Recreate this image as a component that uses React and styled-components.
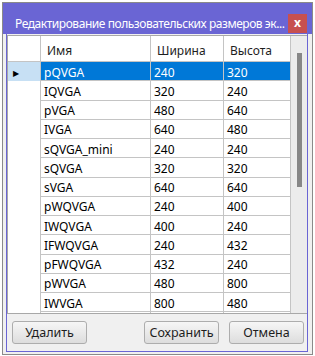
import React from 'react';
import styled, { createGlobalStyle } from 'styled-components';

const Global = createGlobalStyle`
  html, body { margin: 0; padding: 0; background: #ffffff; }
  body { font-family: "Noto Sans", "Segoe UI", sans-serif; }
`;

const PURPLE = '#6a65d4';
const LINE = '#c4c4c4';

const Window = styled.div`
  box-sizing: border-box;
  margin: 2px 0 0 2px;
  width: 311px;
  height: 353px;
  border: 1px solid #8a8a8a;
  background: #f0f0f0;
  display: flex;
  flex-direction: column;
`;

const TitleBar = styled.div`
  box-sizing: border-box;
  flex: none;
  height: 31px;
  background: ${PURPLE};
  display: flex;
  align-items: flex-end;
  gap: 1px;
  padding: 0 5px 1px 12px;
`;

const Title = styled.div`
  flex: 1;
  min-width: 0;
  height: 19px;
  line-height: 19px;
  color: #ffffff;
  font-size: 12px;
  letter-spacing: -0.45px;
  white-space: nowrap;
  overflow: hidden;
`;

const Close = styled.div`
  flex: none;
  width: 19px;
  height: 19px;
  background: #c75050;
  color: #ffffff;
  font-size: 12px;
  font-weight: bold;
  line-height: 17px;
  text-align: center;
`;

const Body = styled.div`
  box-sizing: border-box;
  flex: 1;
  margin: 0 4px 2px 3px;
  border: 1px solid ${PURPLE};
  border-top: none;
  padding-top: 1px;
  display: flex;
  flex-direction: column;
`;

const Grid = styled.div`
  box-sizing: border-box;
  flex: none;
  height: 279px;
  border: 1px solid #a8a8a8;
  border-right: none;
  background: #ffffff;
  display: flex;
  overflow: hidden;
`;

const Table = styled.div`
  flex: 1;
  overflow: hidden;
`;

const Row = styled.div`
  box-sizing: border-box;
  display: grid;
  grid-template-columns: 33px 110px 73px 67px;
  height: ${p => (p.$header ? '26px' : '19.25px')};
`;

const RowHead = styled.div`
  box-sizing: border-box;
  border-right: 1px solid ${LINE};
  border-bottom: ${p => (p.$header ? `1px solid ${LINE}` : 'none')};
  background: ${p => (p.$selected ? '#c7e0f4' : '#ffffff')};
  display: flex;
  align-items: center;
  padding: 1px 0 0 5px;
  font-size: 8px;
  color: #000;
`;

const HeadCell = styled.div`
  box-sizing: border-box;
  border-right: 1px solid ${LINE};
  border-bottom: 1px solid ${LINE};
  padding: 3px 0 0 6px;
  display: flex;
  align-items: center;
  font-size: 12px;
  color: #1e1e1e;
  white-space: nowrap;
`;

const Cell = styled.div`
  box-sizing: border-box;
  border-right: 1px solid ${LINE};
  border-bottom: 1px solid ${LINE};
  padding: 2px 0 0 3px;
  display: flex;
  align-items: center;
  font-size: 12px;
  white-space: nowrap;
  overflow: hidden;
  background: ${p => (p.$selected ? '#0078d7' : '#ffffff')};
  color: ${p => (p.$selected ? '#ffffff' : '#000000')};
`;

const Scrollbar = styled.div`
  box-sizing: border-box;
  flex: none;
  width: 16px;
  background: #ececec;
  padding: 17px 5px 0 6px;
`;

const Thumb = styled.div`
  width: 5px;
  height: 134px;
  background: #878787;
`;

const Footer = styled.div`
  display: flex;
  align-items: flex-start;
  gap: 10px;
  padding: 7px 3px 0 5px;
`;

const Button = styled.div`
  box-sizing: border-box;
  width: 75px;
  height: 23px;
  margin-left: ${p => (p.$push ? 'auto' : '0')};
  border: 1px solid #adadad;
  border-radius: 3px;
  background: linear-gradient(#f6f6f6, #dddddd);
  display: flex;
  align-items: center;
  justify-content: center;
  font-size: 12.5px;
  color: #1e1e1e;
`;

const rows = [
  ['pQVGA', '240', '320'],
  ['IQVGA', '320', '240'],
  ['pVGA', '480', '640'],
  ['IVGA', '640', '480'],
  ['sQVGA_mini', '240', '240'],
  ['sQVGA', '320', '320'],
  ['sVGA', '640', '640'],
  ['pWQVGA', '240', '400'],
  ['IWQVGA', '400', '240'],
  ['IFWQVGA', '240', '432'],
  ['pFWQVGA', '432', '240'],
  ['pWVGA', '480', '800'],
  ['IWVGA', '800', '480'],
  ['', '', ''],
];

export default function App() {
  return (
    <>
      <Global />
      <Window>
        <TitleBar>
          <Title>Редактирование пользовательских размеров эк...</Title>
          <Close>x</Close>
        </TitleBar>
        <Body>
          <Grid>
            <Table>
              <Row $header>
                <RowHead $header />
                <HeadCell>Имя</HeadCell>
                <HeadCell>Ширина</HeadCell>
                <HeadCell>Высота</HeadCell>
              </Row>
              {rows.map((r, i) => (
                <Row key={i}>
                  <RowHead $selected={i === 0}>{i === 0 ? '▶' : ''}</RowHead>
                  <Cell $selected={i === 0}>{r[0]}</Cell>
                  <Cell $selected={i === 0}>{r[1]}</Cell>
                  <Cell $selected={i === 0}>{r[2]}</Cell>
                </Row>
              ))}
            </Table>
            <Scrollbar>
              <Thumb />
            </Scrollbar>
          </Grid>
          <Footer>
            <Button>Удалить</Button>
            <Button $push>Сохранить</Button>
            <Button>Отмена</Button>
          </Footer>
        </Body>
      </Window>
    </>
  );
}
